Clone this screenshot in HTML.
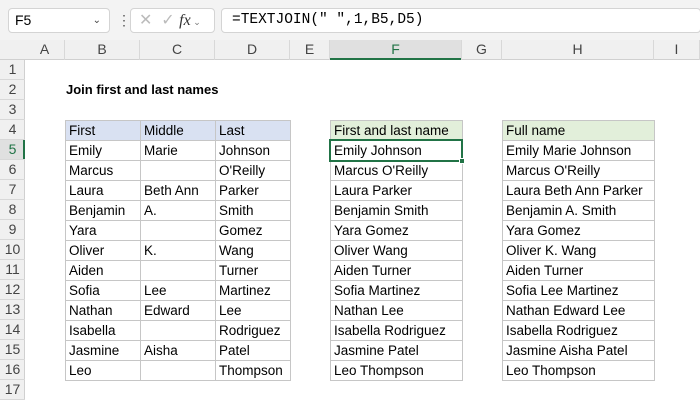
<!DOCTYPE html><html><head><style>
body{margin:0;width:700px;height:400px;overflow:hidden;background:#fff;font-family:"Liberation Sans",Calibri,sans-serif;position:relative}
.a{position:absolute;box-sizing:border-box}
.tb{background:#f3f3f3}
.hd{font-size:14px;color:#444;text-align:center;line-height:19px}
.c{position:absolute;box-sizing:border-box;height:21px;border:1px solid #c6c6c6;font-size:13.5px;line-height:19px;padding-left:3px;color:#000;white-space:nowrap;overflow:hidden}
</style></head><body>
<div class="a tb" style="left:0;top:0;width:700px;height:40px"></div>
<div class="a" style="left:8px;top:8px;width:102px;height:25px;background:#fff;border:1px solid #d4d4d4;border-radius:4px;font-size:14px;line-height:23px;padding-left:6px">F5<span style="position:absolute;right:8px;top:0;font-size:10px;color:#444">&#8964;</span></div>
<div class="a" style="left:117px;top:13px;font-size:14px;color:#555;line-height:14px">⋮</div>
<div class="a" style="left:130px;top:8px;width:85px;height:25px;background:#fff;border:1px solid #d4d4d4;border-radius:4px;color:#bbb;font-size:16px;line-height:23px;padding-left:8px">✕ &nbsp;✓ <i style="font-family:'Liberation Serif',serif;color:#333">fx</i><span style="font-size:9px;color:#777"> ⌄</span></div>
<div class="a" style="left:221px;top:8px;width:480px;height:25px;background:#fff;border:1px solid #d4d4d4;border-radius:4px;font-family:'Liberation Mono',monospace;font-size:14.5px;line-height:23px;padding-left:10px">=TEXTJOIN(" ",1,B5,D5)</div>
<div class="a" style="left:0;top:40px;width:700px;height:20px;background:#f0f0f0;border-bottom:1px solid #d0d0d0"></div>
<div class="a" style="left:0;top:60px;width:25px;height:340px;background:#f0f0f0;border-right:1px solid #d0d0d0"></div>
<div class="a" style="left:330px;top:40px;width:132px;height:20px;background:#e0e0e0;border-bottom:2px solid #217346"></div>
<div class="a" style="left:0;top:140px;width:25px;height:20px;background:#e0e0e0;border-right:2px solid #217346"></div>
<div class="a" style="left:66px;top:83px;font-size:13px;font-weight:bold;line-height:14px">Join first and last names</div>
<div id="t"></div>
<script>
var cols=[["A",25,65],["B",65,140],["C",140,215],["D",215,290],["E",290,330],["F",330,462],["G",462,502],["H",502,654],["I",654,700]],h="";
cols.forEach(function(c){h+='<div class="a hd" style="left:'+c[1]+'px;top:40px;width:'+(c[2]-c[1])+'px;height:20px;border-right:1px solid #d8d8d8;'+(c[0]=="F"?'color:#217346':'')+'">'+c[0]+'</div>'});
for(var r=1;r<=17;r++){h+='<div class="a hd" style="left:0;top:'+(60+(r-1)*20)+'px;width:25px;height:20px;border-bottom:1px solid #d8d8d8;'+(r==5?'color:#217346':'')+'">'+r+'</div>'}
var d=[["First","Middle","Last","First and last name","Full name"],["Emily","Marie","Johnson"],["Marcus","","O'Reilly"],["Laura","Beth Ann","Parker"],["Benjamin","A.","Smith"],["Yara","","Gomez"],["Oliver","K.","Wang"],["Aiden","","Turner"],["Sofia","Lee","Martinez"],["Nathan","Edward","Lee"],["Isabella","","Rodriguez"],["Jasmine","Aisha","Patel"],["Leo","","Thompson"]];
d.forEach(function(row,i){var y=120+i*20;var f,fl;if(i==0){f=row[3];fl=row[4]}else{f=row[0]+" "+row[2];fl=[row[0],row[1],row[2]].filter(Boolean).join(" ")}
var bb=i==0?'background:#d9e1f2;':'',bg=i==0?'background:#e2efda;':'';
h+='<div class="c" style="left:65px;top:'+y+'px;width:76px;'+bb+'">'+row[0]+'</div>';
h+='<div class="c" style="left:140px;top:'+y+'px;width:76px;'+bb+'">'+row[1]+'</div>';
h+='<div class="c" style="left:215px;top:'+y+'px;width:76px;'+bb+'">'+row[2]+'</div>';
h+='<div class="c" style="left:330px;top:'+y+'px;width:133px;'+bg+'">'+f+'</div>';
h+='<div class="c" style="left:502px;top:'+y+'px;width:153px;'+bg+'">'+fl+'</div>';});
h+='<div class="a" style="left:329px;top:139px;width:134px;height:23px;border:2px solid #217346"></div><div class="a" style="left:459px;top:158px;width:6px;height:6px;background:#217346;border:1px solid #fff"></div>';
document.getElementById("t").innerHTML=h;
</script>
</body></html>
